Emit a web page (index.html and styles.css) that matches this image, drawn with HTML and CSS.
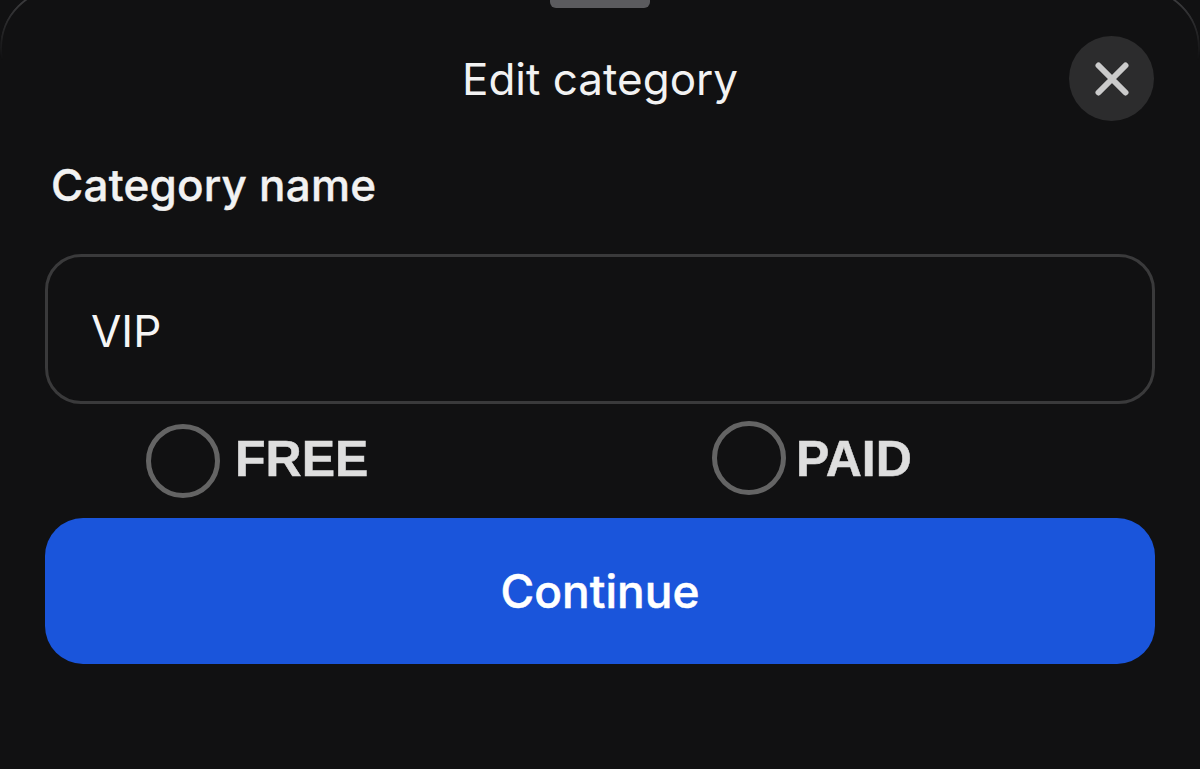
FILE: index.html
```html
<!DOCTYPE html>
<html>
<head>
  <title>Edit category</title>
  <link rel="stylesheet" href="styles.css">
</head>
<body>
  <div class="sheet">
    <div class="handle"></div>

    <div class="sheet-header">
      <h1>Edit category</h1>
      <button class="close-btn" aria-label="Close">
        <svg width="34" height="34" viewBox="0 0 34 34">
          <path d="M3.5 3.5 L30.5 30.5 M30.5 3.5 L3.5 30.5" />
        </svg>
      </button>
    </div>

    <label class="field-label" for="categoryName">Category name</label>
    <input class="field-input" type="text" id="categoryName" value="VIP">

    <div class="type-row">
      <label class="type-option type-free">
        <span class="radio-circle"></span>
        <span class="type-text">FREE</span>
      </label>
      <label class="type-option type-paid">
        <span class="radio-circle"></span>
        <span class="type-text">PAID</span>
      </label>
    </div>

    <button class="continue-btn">Continue</button>
  </div>
</body>
</html>
```

FILE: styles.css
```css
html, body {
  margin: 0;
  height: 100%;
  overflow: hidden;
  background: #111112;
}
body {
  font-family: Inter, 'Liberation Sans', sans-serif;
  color: #f2f2f2;
}
.sheet {
  position: relative;
  height: 769px;
  padding: 0 45px;
  box-sizing: border-box;
}
/* thin rim on the top corners, fades out going down */
.sheet::before {
  content: '';
  position: absolute;
  top: -12px;
  left: 0;
  right: 0;
  height: 120px;
  border: 2px solid #3c3c3e;
  border-radius: 60px;
  box-sizing: border-box;
  -webkit-mask-image: linear-gradient(#000 10px, transparent 72px);
  mask-image: linear-gradient(#000 10px, transparent 72px);
}
.handle {
  width: 100px;
  height: 8px;
  margin: 0 auto;
  background: #5b5b5e;
  border-radius: 0 0 6px 6px;
}
.sheet-header {
  display: flex;
  justify-content: center;
  align-items: center;
  position: relative;
  height: 85px;
  margin-top: 28px;
}
h1 {
  margin: 0;
  font-size: 44px;
  font-weight: 400;
  line-height: 1;
}
.close-btn {
  position: absolute;
  right: 1px;
  top: 0;
  width: 85px;
  height: 85px;
  padding: 0;
  border: none;
  border-radius: 50%;
  background: #2c2c2d;
  display: flex;
  justify-content: center;
  align-items: center;
}
.close-btn svg path {
  fill: none;
  stroke: #cbcbcb;
  stroke-width: 6;
  stroke-linecap: round;
}
.field-label {
  display: block;
  margin: 37px 0 0 6px;
  font-size: 44px;
  font-weight: 500;
  -webkit-text-stroke: 0.4px #f2f2f2;
  letter-spacing: 0.2px;
  line-height: 54px;
}
.field-input {
  display: block;
  width: 1110px;
  height: 150px;
  margin-top: 42px;
  padding: 4px 43px 0;
  box-sizing: border-box;
  background: transparent;
  border: 3px solid #3a3a3b;
  border-radius: 36px;
  color: #f5f5f5;
  font-family: Inter, sans-serif;
  font-size: 44px;
}
.type-row {
  display: grid;
  grid-template-columns: 1fr 1fr;
  height: 114px;
  align-items: center;
  font-family: 'Liberation Sans', Arial, sans-serif;
  font-size: 50px;
  font-weight: 700;
  color: #dedede;
}
.type-option {
  display: flex;
  align-items: center;
}
.type-text {
  padding-bottom: 4px;
  -webkit-text-stroke: 0.5px #dedede;
}
.type-free {
  padding-left: 101px;
  gap: 15px;
}
.type-paid {
  padding-left: 112px;
  gap: 10px;
}
.radio-circle {
  width: 74px;
  height: 74px;
  box-sizing: border-box;
  border: 5px solid #646464;
  border-radius: 50%;
}
.type-paid .radio-circle {
  margin-top: -7px;
}
.continue-btn {
  display: block;
  width: 1110px;
  height: 146px;
  border: none;
  border-radius: 38px;
  background: #1a55db;
  color: #fff;
  font-family: Inter, sans-serif;
  font-size: 46px;
  font-weight: 500;
  -webkit-text-stroke: 0.5px #fff;
}
```
